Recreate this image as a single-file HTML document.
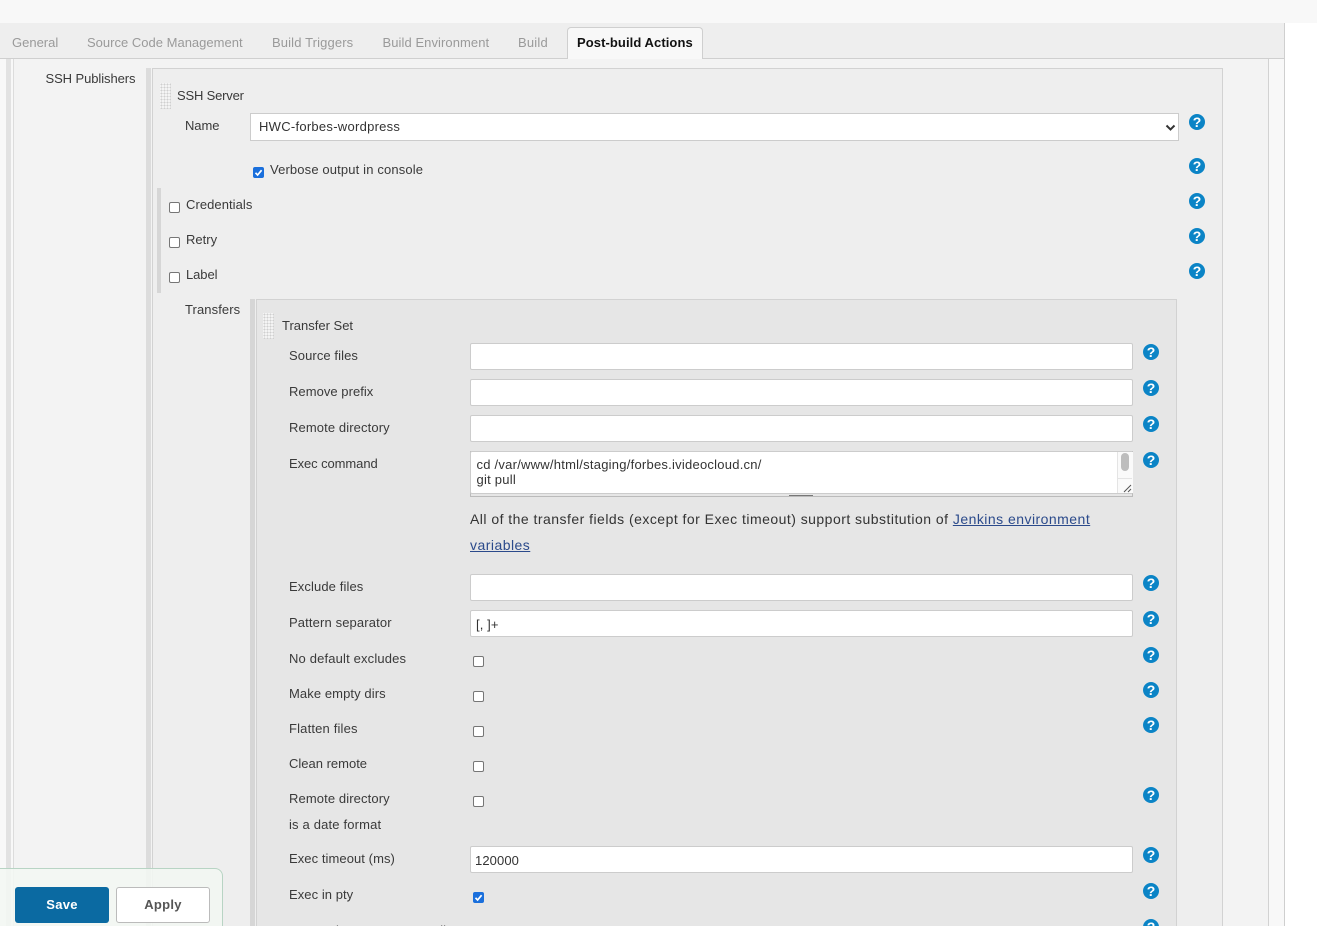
<!DOCTYPE html>
<html lang="en"><head><meta charset="utf-8"><title>Jenkins Configure</title>
<style>
html,body{margin:0;padding:0;width:1317px;height:926px;overflow:hidden;background:#fff}
body{position:relative;font-family:"Liberation Sans",sans-serif;font-size:13px;color:#333;letter-spacing:.1px}
.b{position:absolute}
.t{position:absolute;white-space:nowrap;line-height:16px;color:#3a3a3a}
.tab{color:#9a9a9a;top:35px}
.in{position:absolute;left:470px;width:661px;height:25px;background:#fff;border:1px solid #ccc;border-radius:2px;font-size:13px;line-height:27px;text-indent:5px;color:#333}
.h{position:absolute;width:16px;height:16px;border-radius:50%;background:#0b84c6;color:#fff;font-weight:bold;font-size:14px;line-height:16px;text-align:center;letter-spacing:0}
.c{position:absolute;width:9px;height:9px;border:1px solid #767676;border-radius:2px;background:#fff}
.k{position:absolute;width:11px;height:11px;border-radius:2px;background:#1a6fdc}
.k svg{display:block}
.g{position:absolute;width:11px;height:26px;background-color:#f4f4f4;background-image:radial-gradient(#cfcfcf 40%,transparent 50%);background-size:3px 3px}
</style></head><body>
<div class="b" style="left:0;top:0;width:1317px;height:23px;background:#f8f8f8"></div>
<div class="b" style="left:0;top:23px;width:1284px;height:35px;background:#eeeeee"></div>
<div class="b" style="left:0;top:58px;width:1284px;height:1px;background:#cfcfcf"></div>
<div class="b" style="left:1284px;top:23px;width:1px;height:903px;background:#cfcfcf"></div>
<div class="b" style="left:0;top:59px;width:1284px;height:867px;background:#f8f8f8"></div>
<div class="b" style="left:6px;top:59px;width:5px;height:867px;background:#e2e2e2"></div>
<div class="b" style="left:13px;top:59px;width:1254px;height:867px;background:#f3f3f3;border-left:1px solid #dcdcdc;border-right:1px solid #d2d2d2"></div>
<div class="b" style="left:146px;top:68px;width:5px;height:858px;background:#dcdcdc"></div>
<div class="b" style="left:152px;top:68px;width:1069px;height:858px;background:#eeeeee;border-top:1px solid #d2d2d2;border-left:1px solid #d2d2d2;border-right:1px solid #d2d2d2"></div>
<div class="b" style="left:157px;top:188px;width:4px;height:105px;background:#d6d6d6"></div>
<div class="b" style="left:250px;top:299px;width:5px;height:627px;background:#d6d6d6"></div>
<div class="b" style="left:256px;top:299px;width:919px;height:627px;background:#e6e6e6;border-top:1px solid #d2d2d2;border-left:1px solid #d2d2d2;border-right:1px solid #d2d2d2"></div>

<div class="b" style="left:567px;top:27px;width:136px;height:32px;background:#f8f8f8;border:1px solid #cfcfcf;border-bottom:0;border-radius:4px 4px 0 0;box-sizing:border-box"></div>
<div class="t tab" style="left:12px;letter-spacing:0">General</div>
<div class="t tab" style="left:87px;letter-spacing:.01px">Source Code Management</div>
<div class="t tab" style="left:272px;letter-spacing:.13px">Build Triggers</div>
<div class="t tab" style="left:382.5px;letter-spacing:.07px">Build Environment</div>
<div class="t tab" style="left:518px;letter-spacing:.2px">Build</div>
<div class="t" style="left:577px;top:35px;font-weight:bold;color:#111;letter-spacing:.08px">Post-build Actions</div>

<div class="t" style="left:45.5px;top:71px;letter-spacing:-.08px">SSH Publishers</div>
<div class="g" style="left:160px;top:83px"></div>
<div class="t" style="left:177px;top:88px;letter-spacing:-.18px">SSH Server</div>
<div class="t" style="left:185px;top:118px;letter-spacing:-.08px">Name</div>
<div class="b" style="left:250px;top:113px;width:927px;height:26px;background:#fff;border:1px solid #ccc"></div>
<div class="t" style="left:259px;top:119px;color:#333;letter-spacing:.27px">HWC-forbes-wordpress</div>
<svg class="b" style="left:1165px;top:124px" width="11" height="7"><path d="M1.5 1.5L5.5 5.5L9.5 1.5" fill="none" stroke="#333" stroke-width="2"/></svg>
<div class="h" style="left:1189px;top:114px">?</div>

<div class="k" style="left:253px;top:167px"><svg width="11" height="11"><path d="M2.5 5.8L4.6 8L8.6 3.2" fill="none" stroke="#fff" stroke-width="1.7"/></svg></div>
<div class="t" style="left:270px;top:162px;letter-spacing:.14px">Verbose output in console</div>
<div class="h" style="left:1189px;top:158px">?</div>
<div class="c" style="left:169px;top:202px"></div>
<div class="t" style="left:186px;top:197px;letter-spacing:.06px">Credentials</div>
<div class="h" style="left:1189px;top:193px">?</div>
<div class="c" style="left:169px;top:237px"></div>
<div class="t" style="left:186px;top:232px;letter-spacing:.02px">Retry</div>
<div class="h" style="left:1189px;top:228px">?</div>
<div class="c" style="left:169px;top:272px"></div>
<div class="t" style="left:186px;top:267px;letter-spacing:-.08px">Label</div>
<div class="h" style="left:1189px;top:263px">?</div>

<div class="t" style="left:185px;top:302px;letter-spacing:.09px">Transfers</div>
<div class="g" style="left:263px;top:313px"></div>
<div class="t" style="left:282px;top:318px;letter-spacing:0">Transfer Set</div>

<div class="t" style="left:289px;top:348px;letter-spacing:.09px">Source files</div>
<div class="in" style="top:343px"></div>
<div class="h" style="left:1143px;top:344px">?</div>
<div class="t" style="left:289px;top:384px;letter-spacing:.04px">Remove prefix</div>
<div class="in" style="top:379px"></div>
<div class="h" style="left:1143px;top:380px">?</div>
<div class="t" style="left:289px;top:420px;letter-spacing:.11px">Remote directory</div>
<div class="in" style="top:415px"></div>
<div class="h" style="left:1143px;top:416px">?</div>

<div class="t" style="left:289px;top:456px;letter-spacing:-.08px">Exec command</div>
<div class="b" style="left:470px;top:451px;width:661px;height:45px;background:#e6e6e6;border:1px solid #bbb;border-top:0"></div>
<div class="b" style="left:470px;top:451px;width:661px;height:41px;background:#fff;border:1px solid #ccc;border-radius:2px"></div>
<div class="t" style="left:476.5px;top:457px;line-height:15px;color:#333;letter-spacing:.24px">cd /var/www/html/staging/forbes.ivideocloud.cn/<br>git pull</div>
<div class="b" style="left:1117px;top:452px;width:15px;height:41px;background:#fafafa;border-left:1px solid #e4e4e4"></div>
<div class="b" style="left:1117px;top:478px;width:15px;height:1px;background:#e4e4e4"></div>
<div class="b" style="left:1121px;top:453px;width:8px;height:18px;border-radius:4px;background:#bdbdbd"></div>
<svg class="b" style="left:1123px;top:484px" width="9" height="9"><path d="M1 8L8 1M5 8L8 5" stroke="#555" stroke-width="1" fill="none"/></svg>
<div class="b" style="left:789px;top:495px;width:24px;height:1px;background:#777"></div>
<div class="h" style="left:1143px;top:452px">?</div>

<div class="t" style="left:470px;top:506px;line-height:26px;width:660px;white-space:normal;font-size:14px;letter-spacing:.47px;color:#333">All of the transfer fields (except for Exec timeout) support substitution of <span style="color:#2b4a8b;text-decoration:underline">Jenkins environment variables</span></div>

<div class="t" style="left:289px;top:579px;letter-spacing:.11px">Exclude files</div>
<div class="in" style="top:574px"></div>
<div class="h" style="left:1143px;top:575px">?</div>
<div class="t" style="left:289px;top:615px;letter-spacing:.13px">Pattern separator</div>
<div class="in" style="top:610px">[, ]+</div>
<div class="h" style="left:1143px;top:611px">?</div>
<div class="t" style="left:289px;top:651px;letter-spacing:.16px">No default excludes</div>
<div class="c" style="left:473px;top:656px"></div>
<div class="h" style="left:1143px;top:647px">?</div>
<div class="t" style="left:289px;top:686px;letter-spacing:.09px">Make empty dirs</div>
<div class="c" style="left:473px;top:691px"></div>
<div class="h" style="left:1143px;top:682px">?</div>
<div class="t" style="left:289px;top:721px;letter-spacing:.17px">Flatten files</div>
<div class="c" style="left:473px;top:726px"></div>
<div class="h" style="left:1143px;top:717px">?</div>
<div class="t" style="left:289px;top:756px;letter-spacing:0">Clean remote</div>
<div class="c" style="left:473px;top:761px"></div>
<div class="t" style="left:289px;top:791px;letter-spacing:.11px">Remote directory</div>
<div class="t" style="left:289px;top:817px;letter-spacing:.17px">is a date format</div>
<div class="c" style="left:473px;top:796px"></div>
<div class="h" style="left:1143px;top:787px">?</div>
<div class="t" style="left:289px;top:851px;letter-spacing:.07px">Exec timeout (ms)</div>
<div class="in" style="top:846px;text-indent:4px;letter-spacing:.1px">120000</div>
<div class="h" style="left:1143px;top:847px">?</div>
<div class="t" style="left:289px;top:887px;letter-spacing:.06px">Exec in pty</div>
<div class="k" style="left:473px;top:892px"><svg width="11" height="11"><path d="M2.5 5.8L4.6 8L8.6 3.2" fill="none" stroke="#fff" stroke-width="1.7"/></svg></div>
<div class="h" style="left:1143px;top:883px">?</div>
<div class="t" style="left:289px;top:923px">Exec using Agent Forwarding</div>
<div class="h" style="left:1143px;top:919px">?</div>

<div class="b" style="left:-10px;top:868px;width:231px;height:70px;background:rgba(243,247,243,.88);border:1px solid #b8d4c4;border-radius:8px"></div>
<div class="b" style="left:15px;top:887px;width:94px;height:36px;background:#0b6aa2;border-radius:3px;color:#fff;font-weight:bold;text-align:center;line-height:36px;letter-spacing:.3px">Save</div>
<div class="b" style="left:116px;top:887px;width:92px;height:34px;background:#fff;border:1px solid #bbb;border-radius:3px;color:#555;font-weight:bold;text-align:center;line-height:34px;letter-spacing:.3px">Apply</div>
</body></html>
